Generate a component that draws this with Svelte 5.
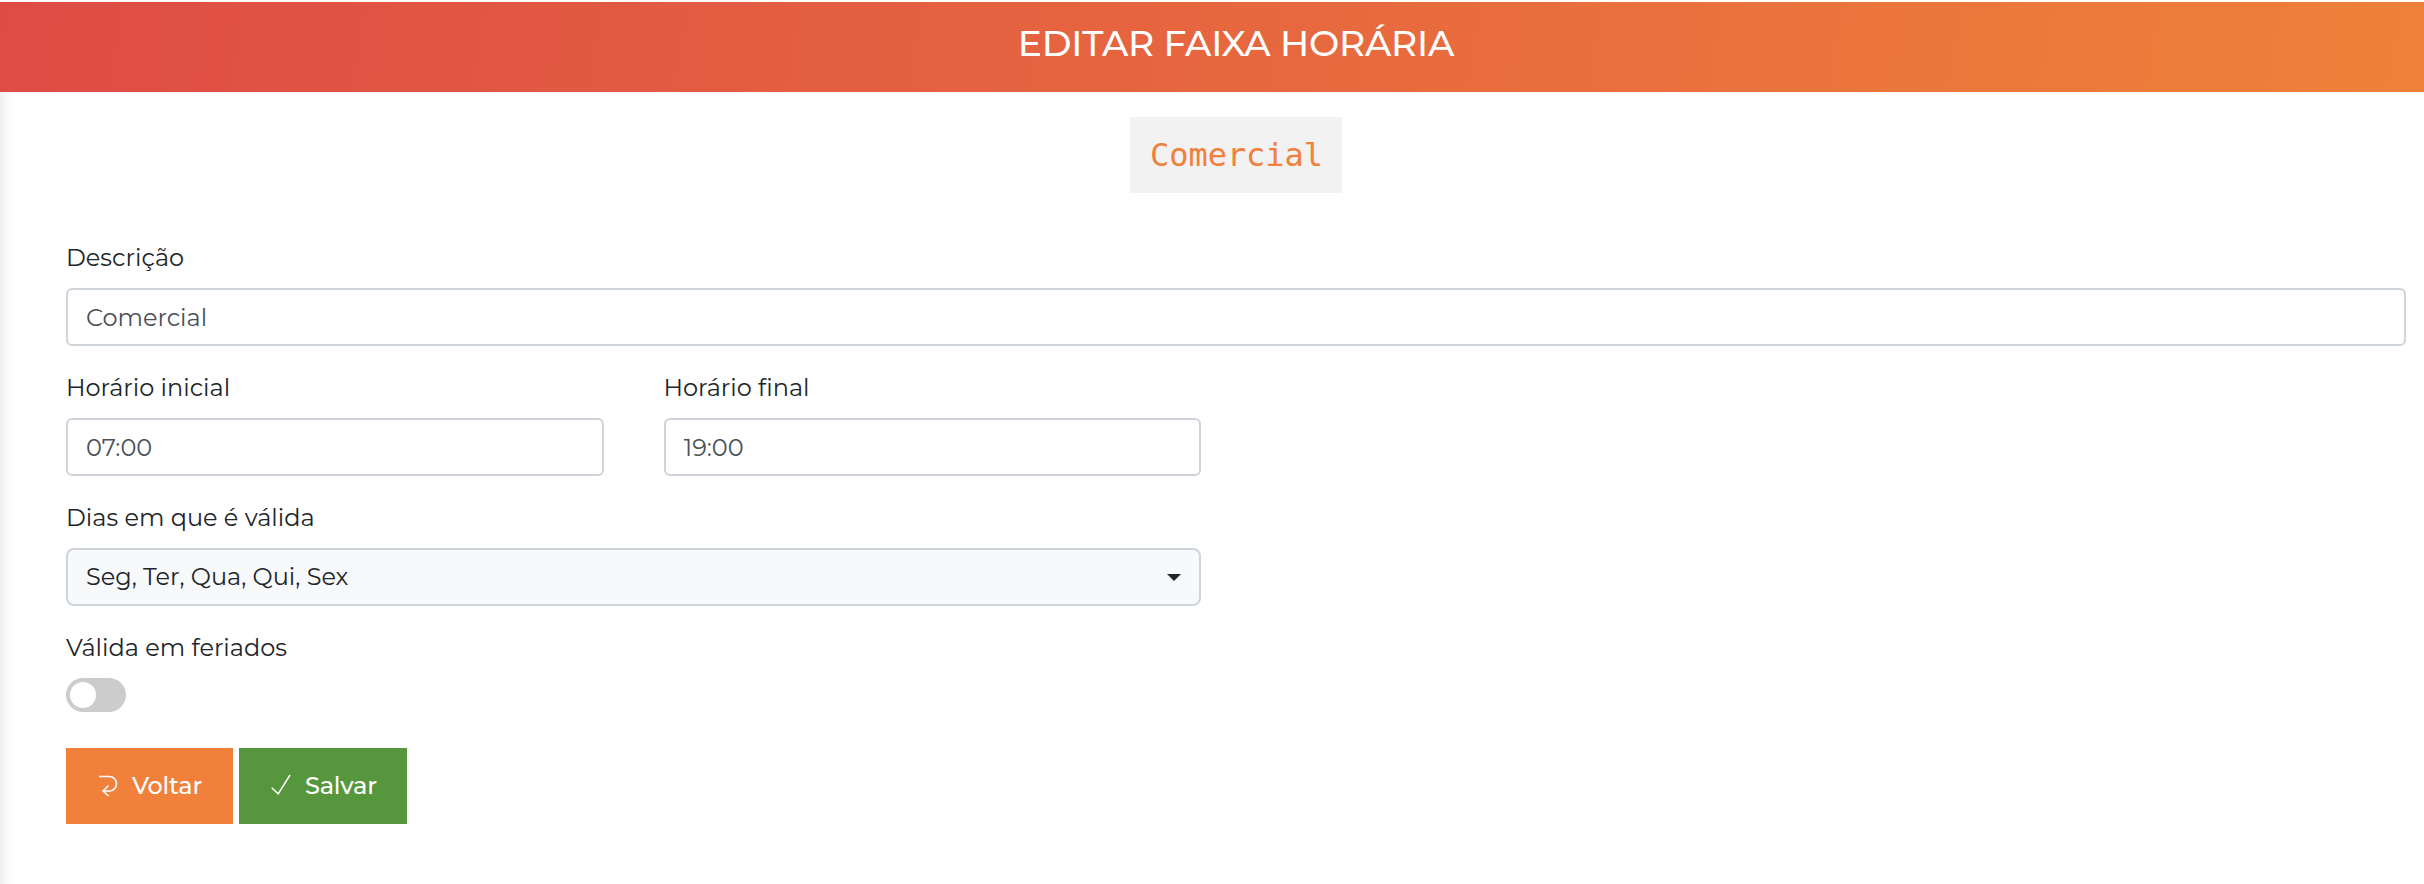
<script>
  let descricao = 'Comercial';
  let horarioInicial = '07:00';
  let horarioFinal = '19:00';
  let dias = ['Seg', 'Ter', 'Qua', 'Qui', 'Sex'];
  let feriados = false;
</script>

<header class="page-header">
  <h1>EDITAR FAIXA HORÁRIA</h1>
</header>

<main>
  <div class="name">
    <code>{descricao}</code>
  </div>

  <form on:submit|preventDefault>
    <div class="field">
      <label for="descricao">Descrição</label>
      <input class="control" id="descricao" type="text" bind:value={descricao} />
    </div>

    <div class="half row">
      <div class="field">
        <label for="inicial">Horário inicial</label>
        <input class="control" id="inicial" type="text" bind:value={horarioInicial} />
      </div>
      <div class="field">
        <label for="final">Horário final</label>
        <input class="control" id="final" type="text" bind:value={horarioFinal} />
      </div>
    </div>

    <div class="half field">
      <label for="dias">Dias em que é válida</label>
      <button class="control select" id="dias" type="button">
        <span>{dias.join(', ')}</span>
        <i class="caret"></i>
      </button>
    </div>

    <div class="field">
      <label for="feriados">Válida em feriados</label>
      <button
        class="switch"
        class:on={feriados}
        id="feriados"
        type="button"
        aria-label="Válida em feriados"
        on:click={() => (feriados = !feriados)}
      >
        <i class="knob"></i>
      </button>
    </div>

    <div class="actions">
      <button class="btn back" type="button">
        <svg width="20" height="24" viewBox="0 0 20 24">
          <path d="M1 2.5h10.5a7 7.25 0 0 1 0 14.5H5M10.5 11.5L5 17l5.5 5" />
        </svg>
        <span>Voltar</span>
      </button>
      <button class="btn save" type="submit">
        <svg width="20" height="24" viewBox="0 0 20 24">
          <path d="M.7 13.8L7.2 19.8 19 1" />
        </svg>
        <span>Salvar</span>
      </button>
    </div>
  </form>
</main>

<style>
  :global(body) {
    background: #fff;
    color: #212529;
    font-family: Montserrat, Inter, sans-serif;
    font-size: 24px;
    font-variant-ligatures: none;
    line-height: 36px;
  }

  .page-header {
    box-sizing: border-box;
    height: 90px;
    margin-top: 2px;
    padding: 18px 18px 0 66px;
    background: linear-gradient(100deg, #de4c45, #ef8139);
  }

  h1 {
    margin: 0;
    color: #fff;
    font-size: 36px;
    font-weight: 500;
    letter-spacing: -0.2px;
    line-height: 46px;
    text-align: center;
  }

  main {
    box-sizing: border-box;
    min-height: 792px;
    padding: 25px 18px 0 66px;
    background: linear-gradient(90deg, #efefef, #f8f8f8 6px, #fdfdfd 12px, #fff 16px);
  }

  .name {
    display: flex;
    justify-content: center;
    margin-bottom: 47px;
  }

  code {
    padding: 20px 19px 20px 20px;
    background: #f2f2f2;
    color: #f0803a;
    font-family: 'DejaVu Sans Mono', monospace;
    font-size: 32px;
    letter-spacing: -0.04px;
    line-height: 36px;
  }

  .field {
    display: flex;
    flex: 1;
    flex-direction: column;
    align-items: flex-start;
    margin-bottom: 24px;
  }

  .half {
    width: 1135px;
  }

  .row {
    display: flex;
    gap: 60px;
  }

  label {
    margin-bottom: 12px;
  }

  .control {
    box-sizing: border-box;
    width: 100%;
    height: 58px;
    padding: 0 18px;
    border: 2px solid #ced4da;
    border-radius: 6px;
    background: #fff;
    color: #495057;
    font: inherit;
  }

  .select {
    display: flex;
    align-items: center;
    justify-content: space-between;
    border-radius: 8px;
    background: #f8f9fb;
    color: #212529;
  }

  .caret {
    border: 7px solid transparent;
    border-top-color: #212529;
    border-bottom: 0;
  }

  .switch {
    width: 60px;
    height: 34px;
    padding: 4px;
    border: 0;
    border-radius: 17px;
    background: #ccc;
  }

  .knob {
    display: block;
    width: 26px;
    height: 26px;
    border-radius: 50%;
    background: #fff;
  }

  .switch.on {
    background: #56973d;
  }

  .switch.on .knob {
    margin-left: auto;
  }

  .actions {
    display: flex;
    gap: 6px;
    margin-top: 36px;
  }

  .btn {
    display: flex;
    align-items: center;
    gap: 14px;
    width: 167px;
    height: 76px;
    padding: 0 0 0 32px;
    border: 0;
    color: #fff;
    font: inherit;
    font-weight: 500;
    letter-spacing: -0.2px;
  }

  .back {
    background: #f0803a;
  }

  .save {
    width: 168px;
    background: #56973d;
  }

  svg {
    fill: none;
    stroke: #fff;
    stroke-width: 1.5;
  }
</style>
